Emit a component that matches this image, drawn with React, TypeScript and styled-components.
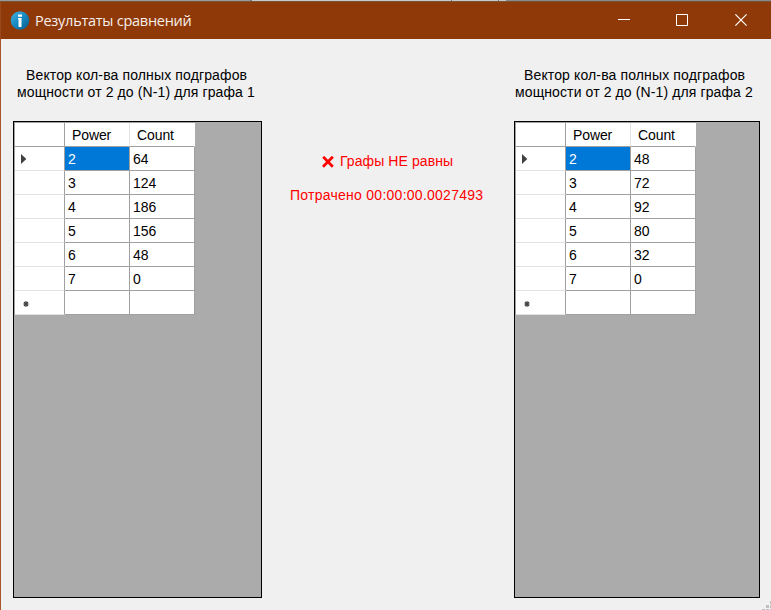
import React from "react";
import styled, { createGlobalStyle } from "styled-components";

const GlobalStyle = createGlobalStyle`
  * { box-sizing: border-box; }
  html, body { margin: 0; padding: 0; background: #f0f0f0; overflow: hidden; }
`;

const Window = styled.main`
  width: 771px;
  height: 610px;
  display: flex;
  flex-direction: column;
  background: #f0f0f0;
  color: #000;
  font: 14px/17px "Liberation Sans", Arial, sans-serif;
`;

const TopEdge = styled.div`
  flex: none;
  height: 2px;
  border-bottom: 1px solid #7b5336;
  background: linear-gradient(90deg, #999 0 250px, #777 250px 252px, #c8c8c8 252px 451px, #777 451px 452px, #c8c8c8 452px 498px, #777 498px 499px, #c8c8c8 499px 506px, #888 506px);
`;

const TitleBar = styled.header`
  flex: none;
  height: 37px;
  display: flex;
  align-items: center;
  padding-left: 9px;
  border-left: 1px solid #99481c;
  background: #8e3907;
  color: #fff;
`;

const Title = styled.h1`
  flex: 1;
  margin: 0 0 0 5px;
  font: 400 14.5px/20px "Open Sans", "Noto Sans", sans-serif;
  letter-spacing: -0.26px;
  color: #f7efea;
`;

const CaptionButton = styled.button`
  width: 58px;
  height: 37px;
  padding: 0 0 1px;
  border: 0;
  display: grid;
  place-items: center;
  background: transparent;
`;

const Controls = styled.div`
  display: flex;
  margin-right: 2px;
`;

const Content = styled.div`
  flex: 1;
  min-height: 0;
  display: grid;
  grid-template-columns: 249px 252px 246px;
  padding: 28px 0 0 12px;
  border-left: 1px solid #a9552a;
`;

const Panel = styled.section`
  display: flex;
  flex-direction: column;
`;

const Heading = styled.h2<{ $shift: number }>`
  margin: 0;
  height: 54px;
  padding-left: ${(p) => p.$shift}px;
  font: inherit;
  white-space: nowrap;
`;

const HeadingLine = styled.div<{ $indent: number; $spacing: number }>`
  padding-left: ${(p) => p.$indent}px;
  letter-spacing: ${(p) => p.$spacing}px;
`;

const GridFrame = styled.div`
  height: 477px;
  border: 1px solid #000;
  background: #ababab;
`;

const GridTable = styled.table`
  width: 181px;
  table-layout: fixed;
  border-collapse: separate;
  border-spacing: 0;
  border-top: 1px solid #a0a0a0;
  border-left: 1px solid #a0a0a0;
`;

const Row = styled.tr`
  height: 24px;
`;

const ColumnHead = styled.th<{ $last?: boolean }>`
  height: 24px;
  padding: 2px 0 0 7px;
  background: #fff;
  border-right: 1px solid ${(p) => (p.$last ? "#fff" : "#e3e3e3")};
  border-bottom: 1px solid #a0a0a0;
  font-weight: 400;
  letter-spacing: -0.1px;
  text-align: left;
`;

const Corner = styled(ColumnHead)`
  width: 50px;
  border-right-color: #a0a0a0;
`;

const RowHead = styled.th`
  height: 24px;
  padding: 0 0 0 5px;
  background: #fff;
  border-right: 1px solid #a0a0a0;
  border-bottom: 1px solid #e3e3e3;
`;

const Cell = styled.td<{ $selected?: boolean }>`
  height: 24px;
  padding: 2px 0 0 3px;
  background: ${(p) => (p.$selected ? "#0078d7" : "#fff")};
  color: ${(p) => (p.$selected ? "#fff" : "#000")};
  border-right: 1px solid #a0a0a0;
  border-bottom: 1px solid #a0a0a0;
`;

const Mark = styled.svg`
  display: block;
`;

const Result = styled.section`
  display: flex;
  flex-direction: column;
  padding: 86px 0 0 28px;
  gap: 17px;
  color: #f00;
  white-space: nowrap;
`;

const Verdict = styled.div`
  display: flex;
  align-items: center;
  padding-left: 32px;
  gap: 6px;
  letter-spacing: 0.08px;
`;

const Elapsed = styled.div`
  letter-spacing: 0.26px;
`;

const Grip = styled.svg`
  position: absolute;
  left: 762px;
  top: 601px;
`;

function DataGrid({ counts }: { counts: number[] }) {
  return (
    <GridFrame>
      <GridTable>
        <thead>
          <Row>
            <Corner />
            <ColumnHead>Power</ColumnHead>
            <ColumnHead $last>Count</ColumnHead>
          </Row>
        </thead>
        <tbody>
          {counts.map((count, i) => (
            <Row key={i}>
              <RowHead>
                {i === 0 && (
                  <Mark width="8" height="10" viewBox="0 0 8 10">
                    <path d="M1 0 6.3 5 1 10z" fill="#404040" />
                  </Mark>
                )}
              </RowHead>
              <Cell $selected={i === 0}>{i + 2}</Cell>
              <Cell>{count}</Cell>
            </Row>
          ))}
          <Row>
            <RowHead>
              <Mark width="12" height="8" viewBox="0 0 12 8">
                <path d="M6 2v6M3.3 5h5.4M4 3l4 4M8 3 4 7" stroke="#404040" strokeWidth="1.1" />
              </Mark>
            </RowHead>
            <Cell />
            <Cell />
          </Row>
        </tbody>
      </GridTable>
    </GridFrame>
  );
}

export default function App() {
  return (
    <>
      <GlobalStyle />
      <Window>
        <TopEdge />
        <TitleBar>
          <svg width="20" height="19" viewBox="0 0 20 19">
            <defs>
              <linearGradient id="info" x1="0" y1="0" x2="1" y2="1">
                <stop offset="0" stopColor="#46b5e2" />
                <stop offset=".5" stopColor="#1689c2" />
                <stop offset="1" stopColor="#075987" />
              </linearGradient>
            </defs>
            <circle cx="10" cy="9.5" r="9.3" fill="url(#info)" />
            <path d="M8 3.5h4v2.3H8zM8 7h3.5v9h-3V8.3H8z" fill="#fff" />
          </svg>
          <Title>Результаты сравнений</Title>
          <Controls>
            <CaptionButton aria-label="Свернуть">
              <svg width="12" height="12"><path d="M0 5.5h12" stroke="#fff" /></svg>
            </CaptionButton>
            <CaptionButton aria-label="Развернуть">
              <svg width="12" height="12"><path d="M.5.5h11v11H.5z" fill="none" stroke="#fff" /></svg>
            </CaptionButton>
            <CaptionButton aria-label="Закрыть">
              <svg width="14" height="12"><path d="m2.4.4 11.2 11.2M13.6.4 2.4 11.6" stroke="#fff" strokeWidth="1.2" /></svg>
            </CaptionButton>
          </Controls>
        </TitleBar>
        <Content>
          <Panel>
            <Heading $shift={4}>
              <HeadingLine $indent={9} $spacing={0.13}>Вектор кол-ва полных подграфов</HeadingLine>
              <HeadingLine $indent={0} $spacing={0.11}>мощности от 2 до (N-1) для графа 1</HeadingLine>
            </Heading>
            <DataGrid counts={[64, 124, 186, 156, 48, 0]} />
          </Panel>
          <Result>
            <Verdict>
              <svg width="12" height="12" viewBox="0 0 12 12">
                <path d="M1.2.8 10.8 10.8M10.9.7 1 10.8" stroke="#f00" strokeWidth="2.7" />
              </svg>
              Графы НЕ равны
            </Verdict>
            <Elapsed>Потрачено 00:00:00.0027493</Elapsed>
          </Result>
          <Panel>
            <Heading $shift={1}>
              <HeadingLine $indent={9} $spacing={0.13}>Вектор кол-ва полных подграфов</HeadingLine>
              <HeadingLine $indent={0} $spacing={0.11}>мощности от 2 до (N-1) для графа 2</HeadingLine>
            </Heading>
            <DataGrid counts={[48, 72, 92, 80, 32, 0]} />
          </Panel>
        </Content>
        <Grip width="9" height="9" viewBox="0 0 9 9" fill="#bfbfbf">
          <path d="M8 0h1v3H8zM4 4h3v3H4zM8 4h1v3H8zM0 8h3v1H0zM4 8h3v1H4zM8 8h1v1H8z" />
        </Grip>
      </Window>
    </>
  );
}
